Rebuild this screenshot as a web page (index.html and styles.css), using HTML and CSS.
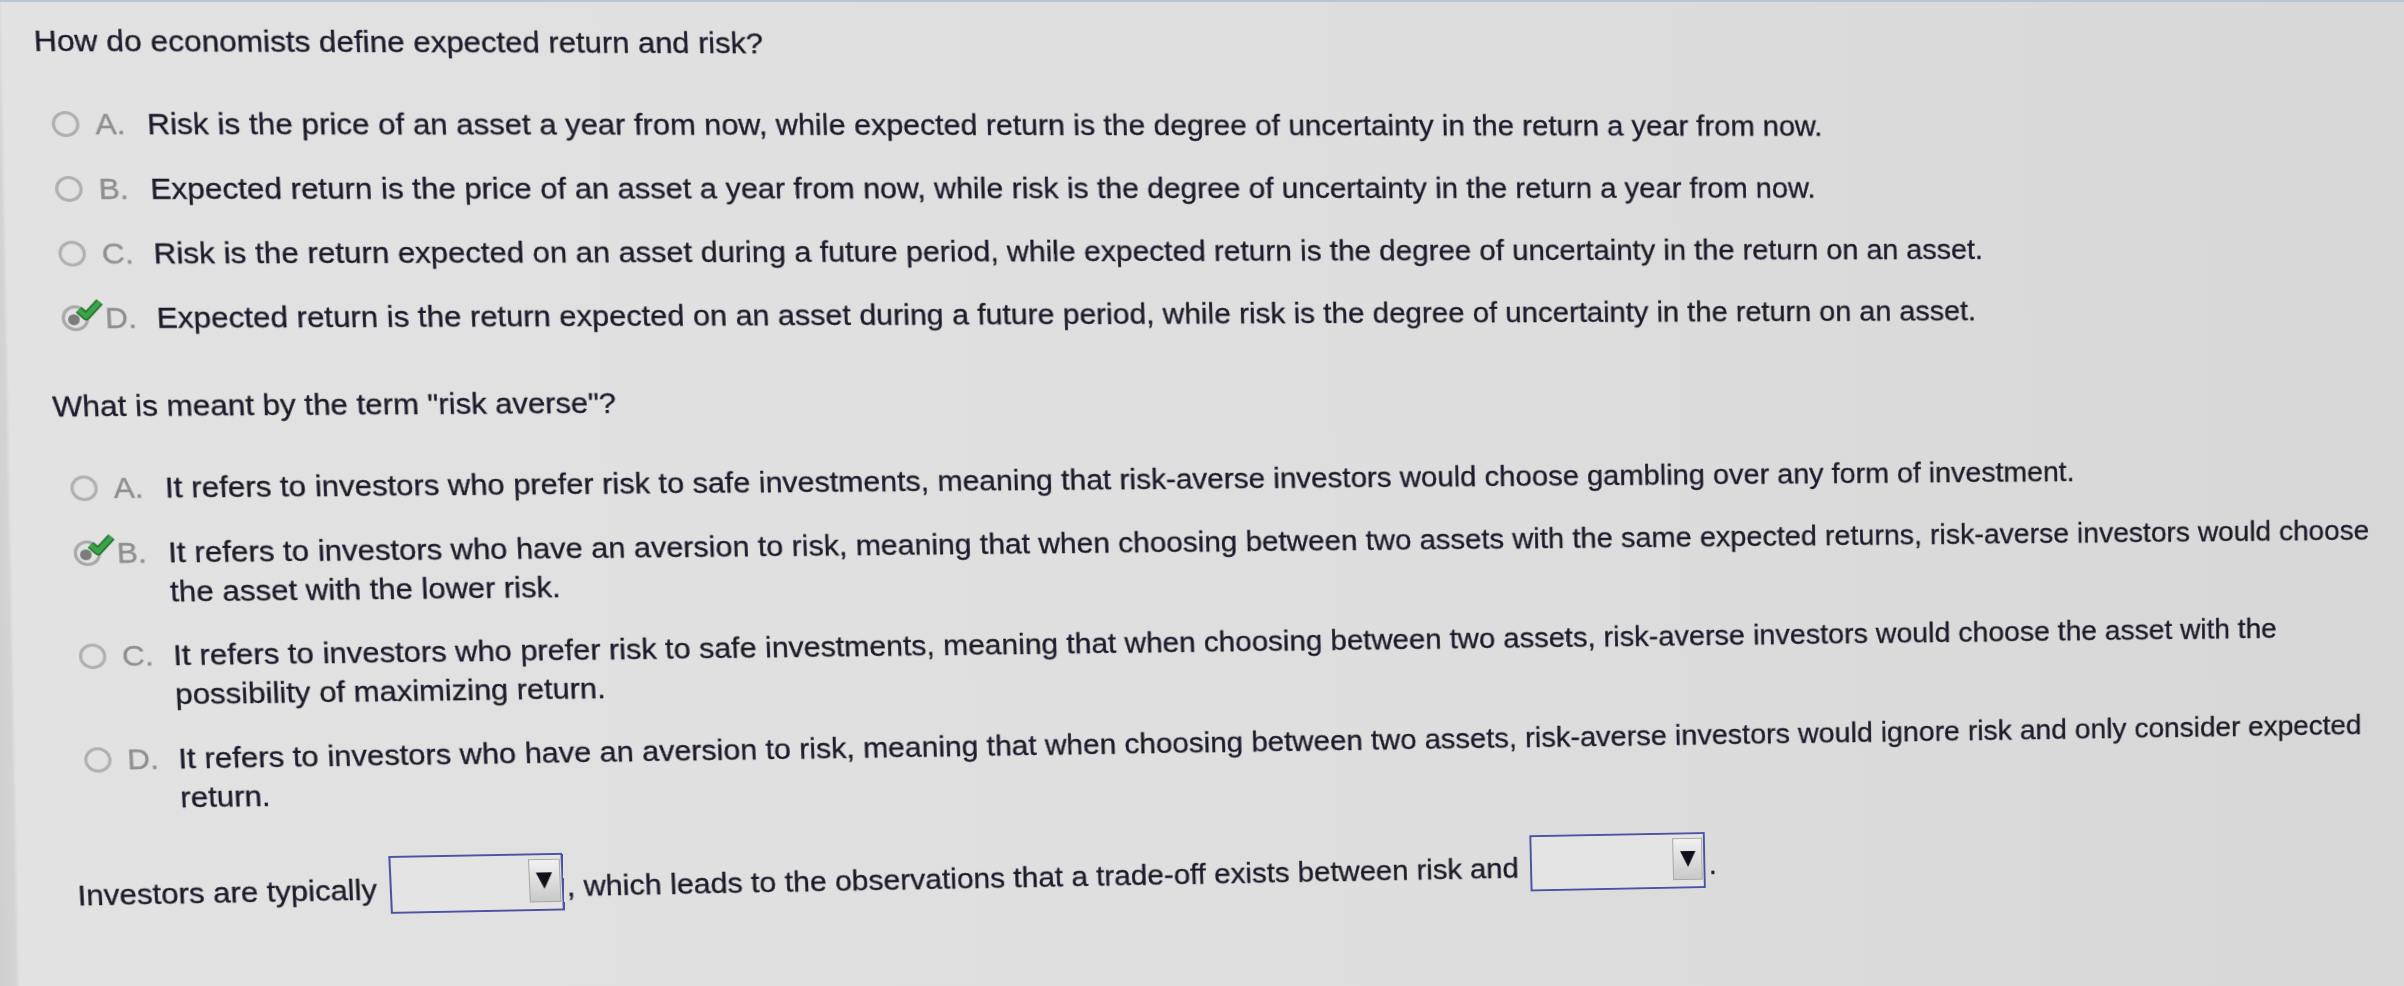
FILE: index.html
```html
<!DOCTYPE html>
<html lang="en">

<head>
    <meta charset="UTF-8">
    <title>Risk and return</title>
    <link rel="stylesheet" href="styles.css">
</head>

<body>
    <div class="sheet">
        <section class="question">
            <p class="prompt">How do economists define expected return and risk?</p>
            <ul class="choices">
                <li class="choice"><span class="radio"></span><span class="letter">A.</span><span class="answer">Risk is the price of an asset a year from now, while expected return is the degree of uncertainty in the return a year from now.</span></li>
                <li class="choice"><span class="radio"></span><span class="letter">B.</span><span class="answer">Expected return is the price of an asset a year from now, while risk is the degree of uncertainty in the return a year from now.</span></li>
                <li class="choice"><span class="radio"></span><span class="letter">C.</span><span class="answer">Risk is the return expected on an asset during a future period, while expected return is the degree of uncertainty in the return on an asset.</span></li>
                <li class="choice picked">
                    <span class="radio">
                        <svg class="tick" viewBox="0 0 24 20">
                            <path d="M3 10 L9 16 L21 3" fill="none" stroke="#1f6a2b" stroke-width="7" stroke-linejoin="round" />
                            <path d="M3 10 L9 16 L21 3" fill="none" stroke="#3ba348" stroke-width="4.5" stroke-linejoin="round" />
                        </svg>
                    </span>
                    <span class="letter">D.</span><span class="answer">Expected return is the return expected on an asset during a future period, while risk is the degree of uncertainty in the return on an asset.</span>
                </li>
            </ul>
        </section>

        <section class="question">
            <p class="prompt">What is meant by the term "risk averse"?</p>
            <ul class="choices">
                <li class="choice"><span class="radio"></span><span class="letter">A.</span><span class="answer">It refers to investors who prefer risk to safe investments, meaning that risk-averse investors would choose gambling over any form of investment.</span></li>
                <li class="choice picked">
                    <span class="radio">
                        <svg class="tick" viewBox="0 0 24 20">
                            <path d="M3 10 L9 16 L21 3" fill="none" stroke="#1f6a2b" stroke-width="7" stroke-linejoin="round" />
                            <path d="M3 10 L9 16 L21 3" fill="none" stroke="#3ba348" stroke-width="4.5" stroke-linejoin="round" />
                        </svg>
                    </span>
                    <span class="letter">B.</span><span class="answer">It refers to investors who have an aversion to risk, meaning that when choosing between two assets with the same expected returns, risk-averse investors would choose the asset with the lower risk.</span>
                </li>
                <li class="choice"><span class="radio"></span><span class="letter">C.</span><span class="answer">It refers to investors who prefer risk to safe investments, meaning that when choosing between two assets, risk-averse investors would choose the asset with the possibility of maximizing return.</span></li>
                <li class="choice"><span class="radio"></span><span class="letter">D.</span><span class="answer">It refers to investors who have an aversion to risk, meaning that when choosing between two assets, risk-averse investors would ignore risk and only consider expected return.</span></li>
            </ul>
        </section>

        <p class="fill">Investors are typically <span class="dropdown"><span class="btn"><svg viewBox="0 0 16 18"><polygon points="0,1 16,1 8,18" /></svg></span></span>, which leads to the observations that a trade-off exists between risk and <span class="dropdown wide"><span class="btn"><svg viewBox="0 0 16 18"><polygon points="0,1 16,1 8,18" /></svg></span></span>.</p>
    </div>
</body>

</html>
```

FILE: styles.css
```css
html,
body {
    margin: 0;
    height: 100%;
}

body {
    overflow: hidden;
    border-top: 2px solid #bcc3d5;
    box-sizing: border-box;
    background: linear-gradient(88.95deg, #cfcfcf 0, #d3d3d3 16px, #e2e2e2 20px, #dedede 55%, #d7d7d7 100%);
    font-family: "Liberation Sans", Arial, sans-serif;
    color: #1b1b2a;
}

/* the screen was photographed at an angle: lean and turn the sheet to match */
.sheet {
    padding: 19px 0 0 38px;
    font-size: 30px;
    line-height: 40px;
    -webkit-text-stroke: 0.35px currentColor;
    transform: perspective(2000px) rotateY(3deg) rotateX(-2deg) scaleX(1.065) skewX(2.9deg);
    transform-origin: 0 168px;
}

.prompt {
    margin: 0;
}

.question+.question {
    margin-top: 49px;
}

.choices {
    list-style: none;
    margin: 43px 0 0;
    padding: 0;
    width: 2345px;
    display: flex;
    flex-direction: column;
    gap: 25px;
}

.question+.question .choices {
    gap: 25.5px;
}

.choice {
    display: flex;
    align-items: flex-start;
}

.radio {
    flex: none;
    position: relative;
    width: 26px;
    height: 26px;
    margin: 7px 0 0 13px;
    box-sizing: border-box;
    border: 3px solid #b0b0b0;
    border-radius: 50%;
}

.picked .radio {
    border-color: #a8a8a8;
}

.picked .radio::after {
    content: "";
    position: absolute;
    left: 3px;
    top: 6px;
    width: 11px;
    height: 11px;
    border-radius: 50%;
    background-color: #7c7c7c;
}

.tick {
    position: absolute;
    left: 10px;
    top: -10px;
    width: 27px;
    height: 23px;
    z-index: 1;
}

.letter {
    flex: none;
    width: 49px;
    margin-left: 15px;
    color: #8f8f8f;
}

.answer {
    flex: 1;
}

.fill {
    margin: 44px 0 0;
    line-height: 64px;
}

.dropdown {
    display: inline-flex;
    justify-content: flex-end;
    align-items: flex-start;
    width: 170px;
    height: 60px;
    margin: 0 3px 14px 4px;
    box-sizing: border-box;
    border: 2px solid #4a54a3;
    background-color: #e4e4e4;
    vertical-align: middle;
    -webkit-text-stroke: 0;
}

.dropdown.wide {
    width: 182px;
}

.btn {
    display: flex;
    align-items: center;
    justify-content: center;
    width: 31px;
    height: 45px;
    margin: 4px 1px 0 0;
    box-sizing: border-box;
    border: 1px solid #a6a6a6;
    background: linear-gradient(#f1f1f1, #c9c9c9);
}

.btn svg {
    width: 16px;
    height: 18px;
    fill: #101018;
}
```
